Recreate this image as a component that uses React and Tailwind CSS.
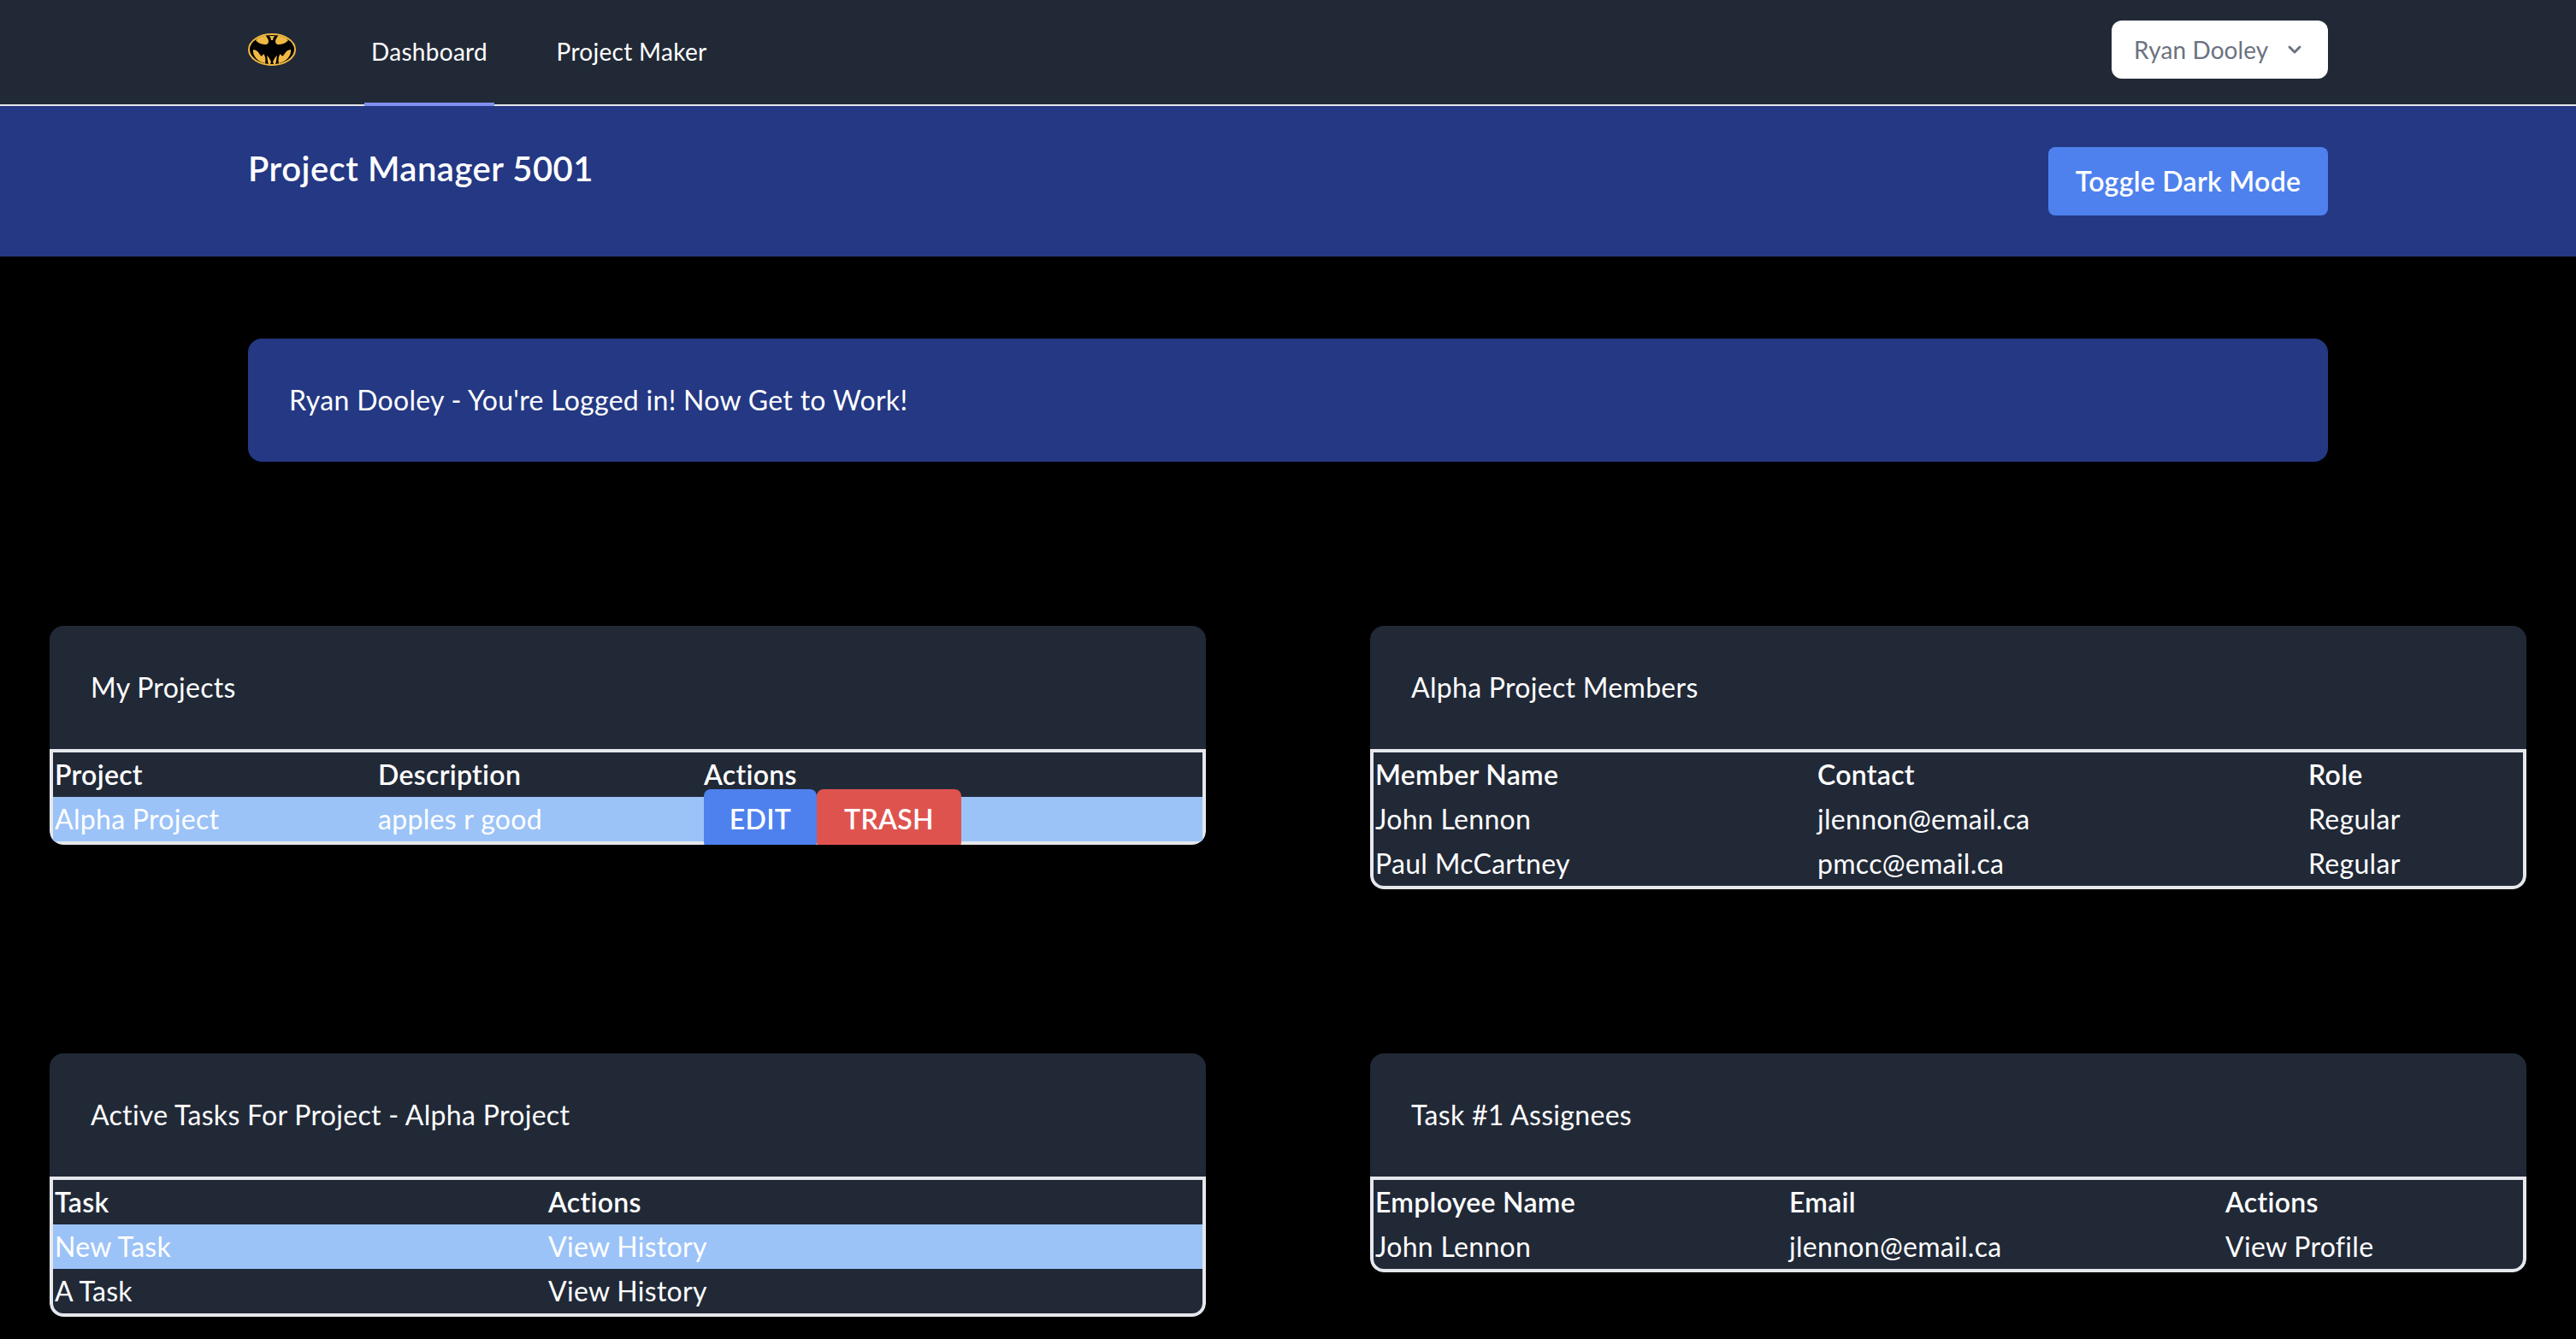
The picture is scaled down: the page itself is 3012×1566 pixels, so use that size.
const font = "font-['Lato','Noto_Sans',sans-serif]"

function BatLogo() {
  return (
    <svg viewBox="0 0 56 38" className="w-[56px] h-[38px]">
      <ellipse cx="28" cy="19" rx="27" ry="18" fill="#000" stroke="#F0B942" strokeWidth="2" />
      <path d="M21 3C17 3 11 5 9 8C11 11 16 13 21 13C23 13 24 11 24 9C24 7 22 5 21 3Z" fill="#F0B942" />
      <path d="M35 3C39 3 45 5 47 8C45 11 40 13 35 13C33 13 32 11 32 9C32 7 34 5 35 3Z" fill="#F0B942" />
      <path d="M26 4L27 8H29L30 4L32 3H24Z" fill="#F0B942" />
      <path d="M6 19C5 26 11 33 20 35C21 30 20 26 18 24C17 27 15 27 14 25C12 21 9 19 6 19Z" fill="#F0B942" />
      <path d="M50 19C51 26 45 33 36 35C35 30 36 26 38 24C39 27 41 27 42 25C44 21 47 19 50 19Z" fill="#F0B942" />
      <path d="M22 26C25 28 26 31 28 36C30 31 31 28 34 26C33 31 33 34 32 36H24C23 34 23 31 22 26Z" fill="#F0B942" />
      <path d="M26 36L28 30L30 36Z" fill="#000" />
    </svg>
  )
}

function Panel({ title, children }) {
  return (
    <section className="bg-[#212937] rounded-2xl overflow-hidden">
      <h5 className="p-12 text-[32px] leading-[48px] text-white">{title}</h5>
      <div className="border-4 border-[#E5E7EB] rounded-b-2xl">
        {children}
      </div>
    </section>
  )
}

function DataTable({ headers, widths, rows }) {
  return (
    <table className="w-full table-fixed border-collapse text-left text-[32px] leading-[48px] text-white">
      <colgroup>
        {widths.map((w, i) => <col key={i} className={w} />)}
      </colgroup>
      <thead>
        <tr className="h-[52px]">
          {headers.map((h) => (
            <th key={h} className="px-[2px] py-0 font-semibold">{h}</th>
          ))}
        </tr>
      </thead>
      <tbody>
        {rows.map((row, i) => (
          <tr key={i} className={row.active ? 'h-[52px] bg-[#9CC3F8]' : 'h-[52px]'}>
            {row.cells.map((c, j) => (
              <td key={j} className="px-[2px] py-0 font-normal">{c}</td>
            ))}
          </tr>
        ))}
      </tbody>
    </table>
  )
}

export default function App() {
  const rowActions = (
    <div className="flex -my-[9px]">
      <button className="h-[70px] w-[132px] rounded-lg bg-[#4E81EE] text-[32px] font-semibold text-white">EDIT</button>
      <button className="h-[70px] w-[169px] rounded-lg bg-[#DF534F] text-[32px] font-semibold text-white">TRASH</button>
    </div>
  )

  return (
    <div className={`min-h-screen bg-black tracking-[0.3px] ${font}`}>
      {/* Top nav */}
      <nav className="h-[124px] bg-[#212937] border-b-2 border-[#E5E7EB] px-[290px] flex items-start justify-between">
        <div className="flex items-start">
          <div className="mt-[39px]"><BatLogo /></div>
          <a className="ml-[80px] h-[124px] w-[152px] border-b-4 border-[#8090F0] flex items-center justify-center text-[28px] whitespace-nowrap text-white">Dashboard</a>
          <a className="ml-[73px] h-[120px] w-[175px] flex items-center justify-center text-[28px] whitespace-nowrap text-white">Project Maker</a>
        </div>
        <button className="mt-[24px] h-[68px] w-[253px] rounded-xl bg-white flex items-center pl-[26px] text-[28px] tracking-[0.1px] whitespace-nowrap text-[#6B7280]">
          Ryan Dooley
          <svg viewBox="0 0 20 20" className="ml-[19px] w-[24px] h-[24px]" fill="none" stroke="#6B7280" strokeWidth="2.4" strokeLinecap="round" strokeLinejoin="round">
            <path d="M5 7.5l5 5 5-5" />
          </svg>
        </button>
      </nav>

      {/* Header bar */}
      <header className="h-[176px] bg-[#243883] px-[290px] flex items-start justify-between">
        <h1 className="mt-[43px] text-[40px] leading-[60px] font-semibold tracking-[0.5px] text-white">Project Manager 5001</h1>
        <button className="mt-[48px] h-[80px] w-[327px] rounded-lg bg-[#4E81EE] text-[32px] font-semibold text-white">Toggle Dark Mode</button>
      </header>

      {/* Login notice */}
      <div className="mx-[290px] mt-[96px] p-12 rounded-2xl bg-[#243883] text-[32px] leading-[48px] text-white">
        Ryan Dooley - You're Logged in! Now Get to Work!
      </div>

      <main className="mt-[192px] px-[58px] grid grid-cols-2 gap-x-[192px] grid-rows-[500px_auto] items-start">
        <Panel title="My Projects">
          <DataTable
            headers={['Project', 'Description', 'Actions']}
            widths={['w-[378px]', 'w-[381px]', 'w-auto']}
            rows={[{ active: true, cells: ['Alpha Project', 'apples r good', rowActions] }]}
          />
        </Panel>
        <Panel title="Alpha Project Members">
          <DataTable
            headers={['Member Name', 'Contact', 'Role']}
            widths={['w-[517px]', 'w-[574px]', 'w-auto']}
            rows={[
              { cells: ['John Lennon', 'jlennon@email.ca', 'Regular'] },
              { cells: ['Paul McCartney', 'pmcc@email.ca', 'Regular'] },
            ]}
          />
        </Panel>
        <Panel title="Active Tasks For Project - Alpha Project">
          <DataTable
            headers={['Task', 'Actions']}
            widths={['w-[577px]', 'w-auto']}
            rows={[
              { active: true, cells: ['New Task', 'View History'] },
              { cells: ['A Task', 'View History'] },
            ]}
          />
        </Panel>
        <Panel title="Task #1 Assignees">
          <DataTable
            headers={['Employee Name', 'Email', 'Actions']}
            widths={['w-[484px]', 'w-[510px]', 'w-auto']}
            rows={[{ cells: ['John Lennon', 'jlennon@email.ca', 'View Profile'] }]}
          />
        </Panel>
      </main>
    </div>
  )
}
